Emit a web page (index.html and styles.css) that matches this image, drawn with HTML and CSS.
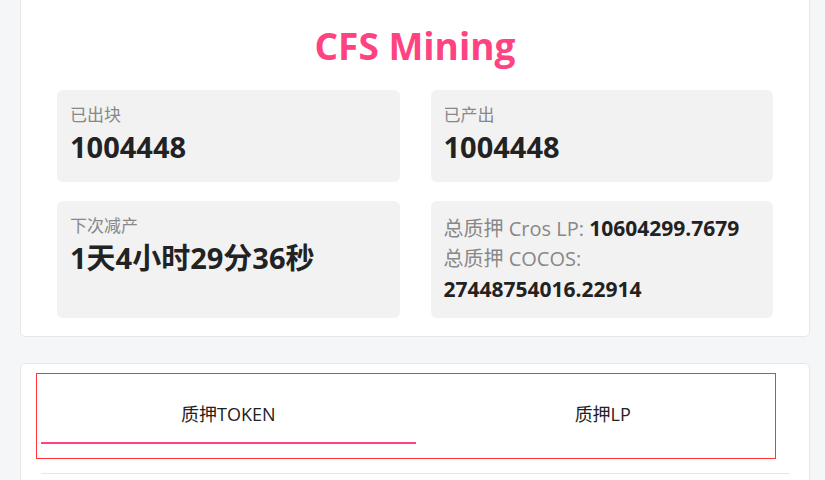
FILE: index.html
```html
<!DOCTYPE html>
<html lang="zh-CN">

<head>
    <meta charset="UTF-8">
    <meta name="viewport" content="width=device-width, initial-scale=1.0">
    <title>CFS Mining</title>
    <link rel="stylesheet" href="styles.css">
</head>

<body>
    <div class="wrap">
        <!-- overview -->
        <div class="card overview">
            <h1 class="title">CFS Mining</h1>
            <div class="stats">
                <div class="stat">
                    <div class="stat-label">已出块</div>
                    <div class="stat-value">1004448</div>
                </div>
                <div class="stat">
                    <div class="stat-label">已产出</div>
                    <div class="stat-value">1004448</div>
                </div>
                <div class="stat">
                    <div class="stat-label">下次减产</div>
                    <div class="stat-value">1天4小时29分36秒</div>
                </div>
                <div class="stat stat-lines">
                    <div><span class="stat-label">总质押 Cros LP: </span><b>10604299.7679</b></div>
                    <div><span class="stat-label">总质押 COCOS: </span><b>27448754016.22914</b></div>
                </div>
            </div>
        </div>

        <!-- staking tabs -->
        <div class="card staking">
            <div class="focus-box"></div>
            <div class="tabs">
                <div class="tab active">质押TOKEN</div>
                <div class="tab">质押LP</div>
            </div>
            <div class="divider"></div>
        </div>
    </div>
</body>

</html>
```

FILE: styles.css
```css
body {
    margin: 0;
    padding: 0;
    background-color: #f5f6f8;
    font-family: 'Open Sans', 'Noto Sans CJK SC', sans-serif;
    color: #222;
}

.wrap {
    margin-left: 20px;
    width: 790px;
}

.card {
    background: #fff;
    border: 1px solid #e6e7ea;
    border-radius: 5px;
    box-sizing: border-box;
}

.overview {
    margin-top: -8px;
    padding: 29px 36px 18px 36px;
}

.title {
    margin: 0 0 20px;
    font-size: 37px;
    line-height: 1.3;
    font-weight: 700;
    text-align: center;
    color: #ff4381;
}

.stats {
    display: grid;
    grid-template-columns: 1fr 1fr;
    column-gap: 31px;
    row-gap: 19px;
}

.stat {
    background-color: #f2f2f2;
    border-radius: 6px;
    padding: 12px 13px 17px;
}

.stat-label {
    font-size: 17px;
    line-height: 1.5;
    color: #888;
}

.stat-value {
    font-size: 29px;
    line-height: 1.3;
    font-weight: 700;
    color: #222;
}

.stat-lines {
    padding-top: 12px;
    padding-bottom: 13px;
}

.stat-lines div {
    font-size: 20px;
    line-height: 30px;
}

.stat-lines .stat-label {
    font-size: 20px;
}

.stat-lines b {
    font-size: 21px;
    font-weight: 700;
    color: #222;
}

.staking {
    position: relative;
    margin-top: 26px;
    padding: 20px 19px 10px 20px;
    height: 140px;
}

.focus-box {
    position: absolute;
    left: 15px;
    top: 9px;
    width: 740px;
    height: 86px;
    border: 1px solid #ff3338;
    box-sizing: border-box;
}

.tabs {
    display: flex;
}

.tab {
    flex: 1;
    height: 60px;
    display: flex;
    align-items: center;
    justify-content: center;
    font-size: 18px;
    color: #222;
    box-sizing: border-box;
    border-bottom: 2px solid transparent;
}

.tab.active {
    border-bottom-color: #ff4381;
}

.divider {
    margin-top: 29px;
    height: 1px;
    background-color: #e6e7ea;
}
```
